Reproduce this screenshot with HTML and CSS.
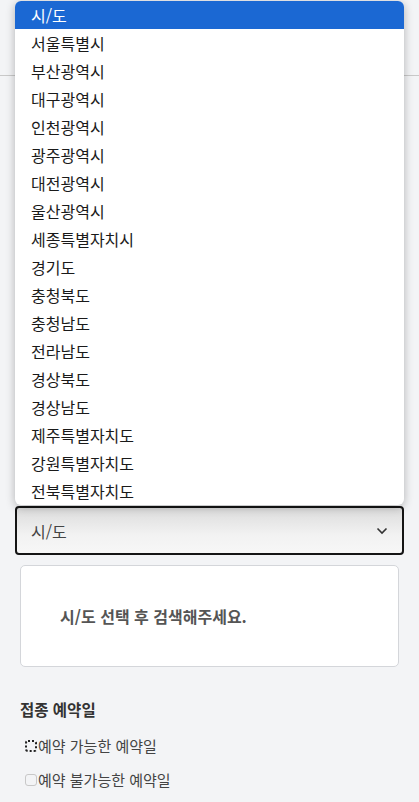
FILE: index.html
```html
<!DOCTYPE html>
<html lang="ko">
<head>
<meta charset="utf-8">
<title>시/도 선택</title>
<link rel="stylesheet" href="styles.css">
</head>
<body>
<header class="topbar"></header>
<main class="content">
  <div class="select-box">
    <span class="select-value">시/도</span>
    <svg class="chevron" width="12" height="8" viewBox="0 0 12 8"><path d="M1.5 1.5 L6 6 L10.5 1.5" fill="none" stroke="#333" stroke-width="1.6"/></svg>
  </div>
  <div class="result-box">
    <p class="result-msg">시/도 선택 후 검색해주세요.</p>
  </div>
  <h3 class="section-title">접종 예약일</h3>
  <ul class="legend">
    <li class="legend-item"><span class="swatch dotted"></span>예약 가능한 예약일</li>
    <li class="legend-item"><span class="swatch plain"></span>예약 불가능한 예약일</li>
  </ul>
</main>
<ul class="dropdown">
  <li class="option selected">시/도</li>
  <li class="option">서울특별시</li>
  <li class="option">부산광역시</li>
  <li class="option">대구광역시</li>
  <li class="option">인천광역시</li>
  <li class="option">광주광역시</li>
  <li class="option">대전광역시</li>
  <li class="option">울산광역시</li>
  <li class="option">세종특별자치시</li>
  <li class="option">경기도</li>
  <li class="option">충청북도</li>
  <li class="option">충청남도</li>
  <li class="option">전라남도</li>
  <li class="option">경상북도</li>
  <li class="option">경상남도</li>
  <li class="option">제주특별자치도</li>
  <li class="option">강원특별자치도</li>
  <li class="option">전북특별자치도</li>
</ul>
</body>
</html>
```
FILE: styles.css
```css
html, body {
  margin: 0;
  padding: 0;
}
body {
  background: #f3f4f6;
  font-family: "Noto Sans CJK KR", "Noto Sans", sans-serif;
  color: #333;
  width: 419px;
  height: 802px;
  overflow: hidden;
  position: relative;
}
.topbar {
  height: 75px;
  border-bottom: 1px solid #c9c9c9;
  background: #f3f4f6;
}
.content {
  padding: 430px 15px 0 15px;
  display: flex;
  flex-direction: column;
}
.select-box {
  height: 45px;
  border: 2px solid #151515;
  border-radius: 4px;
  background: linear-gradient(#dcdcdc, #f2f2f2 60%, #f7f7f7);
  display: flex;
  align-items: center;
  justify-content: space-between;
  padding: 0 14px 0 14px;
}
.select-value {
  font-size: 16px;
  color: #444;
}
.chevron {
  display: block;
}
.result-box {
  margin: 10px 5px 0 5px;
  height: 100px;
  border: 1px solid #d4d6da;
  border-radius: 5px;
  background: #fff;
  display: flex;
  align-items: center;
}
.result-msg {
  margin: 0 0 0 39px;
  font-size: 16px;
  font-weight: 700;
  color: #555;
}
.section-title {
  margin: 30px 0 0 5px;
  font-size: 15.5px;
  font-weight: 700;
  color: #333;
  line-height: 24px;
}
.legend {
  list-style: none;
  margin: 15px 0 0 10px;
  padding: 0;
  display: flex;
  flex-direction: column;
  gap: 14px;
}
.legend-item {
  display: flex;
  align-items: center;
  font-size: 15px;
  color: #444;
  line-height: 20px;
}
.swatch {
  width: 12px;
  height: 12px;
  box-sizing: border-box;
  margin-right: 1px;
  border-radius: 3px;
}
.swatch.dotted {
  border: 2px dotted #222;
}
.swatch.plain {
  border: 1px solid #c8c8c8;
}
.dropdown {
  position: absolute;
  left: 15px;
  top: 1px;
  width: 389px;
  margin: 0;
  padding: 0;
  list-style: none;
  background: #fff;
  border-radius: 6px;
  box-shadow: 0 2px 10px rgba(0,0,0,0.28);
  overflow: hidden;
}
.option {
  height: 28px;
  line-height: 28px;
  padding-left: 16px;
  font-size: 16px;
  color: #1a1a1a;
}
.option.selected {
  background: #1b68d3;
  color: #fff;
}
```
